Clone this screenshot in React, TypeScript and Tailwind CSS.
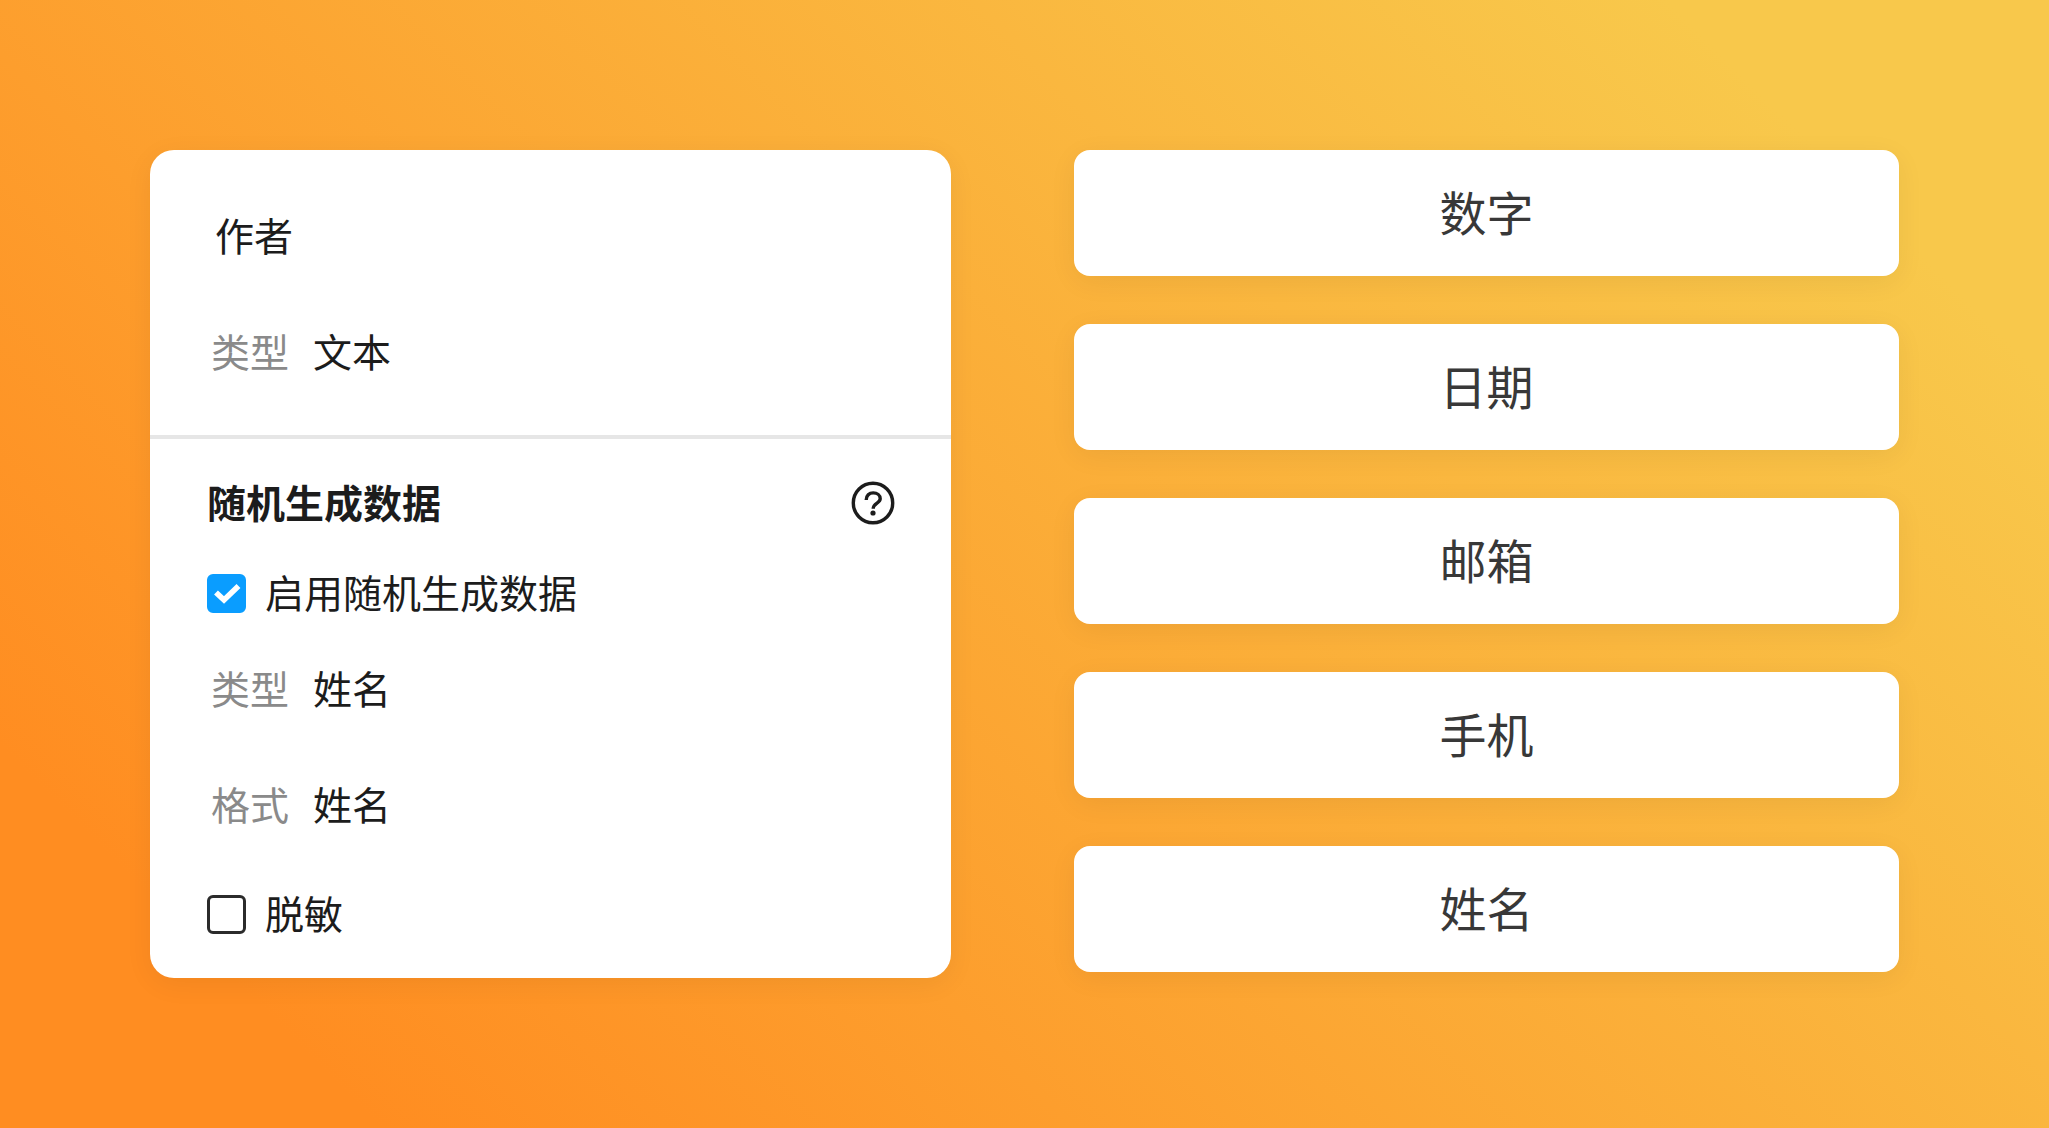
import { useState } from "react";

const OPTIONS = ["数字", "日期", "邮箱", "手机", "姓名"];

function FieldRow({ label, value }: { label: string; value: string }) {
  return (
    <dl className="flex gap-6 pl-1">
      <dt className="text-[#8a8a8a]">{label}</dt>
      <dd>{value}</dd>
    </dl>
  );
}

function CheckRow({ label, checked, onChange }: { label: string; checked: boolean; onChange: (checked: boolean) => void }) {
  return (
    <label className="flex items-center gap-[19px]">
      <span className="grid h-[39px] w-[39px] shrink-0">
        <input
          type="checkbox"
          checked={checked}
          onChange={(e) => onChange(e.target.checked)}
          className="col-start-1 row-start-1 appearance-none rounded-md border-3 border-[#2b2b2b] bg-white checked:border-[#0a9dff] checked:bg-[#0a9dff]"
        />
        {checked && (
          <svg viewBox="0 0 39 39" className="pointer-events-none col-start-1 row-start-1" fill="none" stroke="white" strokeWidth="5.6">
            <path d="M9 18.5 L17 26 L31.5 12" />
          </svg>
        )}
      </span>
      <span className="pb-1">{label}</span>
    </label>
  );
}

function HelpIcon() {
  return (
    <svg viewBox="0 0 44 44" className="h-11 w-11" fill="none" stroke="#1c1c1c" strokeWidth="3.4">
      <circle cx="22" cy="22" r="19.7" />
      <path d="M15.2 19 C15.2 14.6 18.2 11.9 22.2 11.9 C26.2 11.9 29.2 14.4 29.2 17.8 C29.2 22.4 22.2 21.8 22.2 27.8" />
      <circle cx="22" cy="32" r="2.6" fill="#1c1c1c" stroke="none" />
    </svg>
  );
}

function FieldCard() {
  const [enabled, setEnabled] = useState(true);
  const [masked, setMasked] = useState(false);

  return (
    <section className="rounded-3xl bg-white text-[39px] leading-[54px] text-[#1c1c1c] shadow-[0_6px_28px_rgba(0,0,0,0.06)]">
      <div className="flex flex-col gap-[62px] border-b-4 border-[#e6e6e6] px-[57px] pt-[57px] pb-[58px]">
        <h1 className="pl-2">作者</h1>
        <FieldRow label="类型" value="文本" />
      </div>
      <div className="flex flex-col py-[35px] pr-[56px] pl-[57px]">
        <div className="mb-8 flex items-center justify-between">
          <h2 className="pb-1 font-bold">随机生成数据</h2>
          <button type="button" aria-label="帮助">
            <HelpIcon />
          </button>
        </div>
        <CheckRow label="启用随机生成数据" checked={enabled} onChange={setEnabled} />
        <div className="mt-[38px] mb-[55px] flex flex-col gap-[62px]">
          <FieldRow label="类型" value="姓名" />
          <FieldRow label="格式" value="姓名" />
        </div>
        <CheckRow label="脱敏" checked={masked} onChange={setMasked} />
      </div>
    </section>
  );
}

export default function App() {
  return (
    <main
      lang="zh-CN"
      className="grid min-h-screen grid-cols-[801fr_825fr] items-start gap-[123px] bg-[linear-gradient(45deg,#ff8d21_12%,#f8c84b_88%)] p-[150px] font-['Noto_Sans_CJK_SC',sans-serif]"
    >
      <FieldCard />
      <div className="flex flex-col gap-12">
        {OPTIONS.map((option) => (
          <button
            key={option}
            type="button"
            className="h-[126px] rounded-2xl bg-white pb-1 text-[47px] leading-[68px] text-[#383838] shadow-[0_6px_28px_rgba(0,0,0,0.06)]"
          >
            {option}
          </button>
        ))}
      </div>
    </main>
  );
}
